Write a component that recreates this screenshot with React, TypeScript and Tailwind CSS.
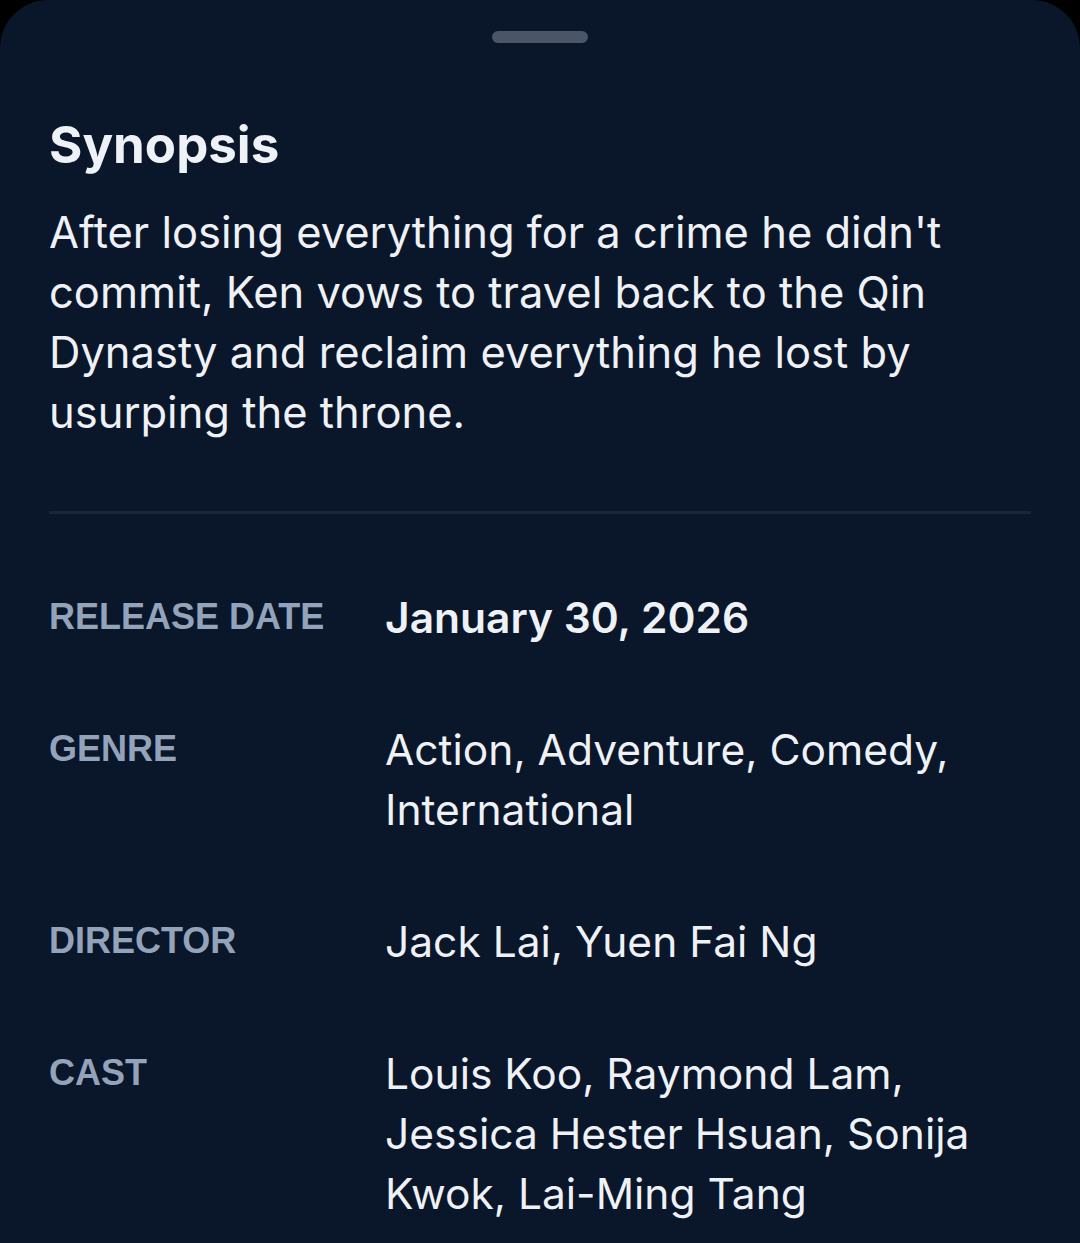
const details = [
  { label: "Release Date", value: "January 30, 2026", strong: true },
  { label: "Genre", value: "Action, Adventure, Comedy, International" },
  { label: "Director", value: "Jack Lai, Yuen Fai Ng" },
  { label: "Cast", value: "Louis Koo, Raymond Lam, Jessica Hester Hsuan, Sonija Kwok, Lai-Ming Tang" },
]

export default function App() {
  return (
    <div className="min-h-[1243px] bg-black">
      <div className="min-h-[1243px] rounded-t-[48px] bg-[#0a162a] px-[49px] pt-[31px] pb-10 font-['Inter',sans-serif] text-[#eef1f5]">
        {/* Drag handle */}
        <div className="mx-auto h-3 w-24 rounded-full bg-[#4a5568]" />

        {/* Synopsis */}
        <h2 className="mt-[72px] text-[51px] font-bold leading-[60px]">Synopsis</h2>
        <p className="mt-[27px] text-[43.5px] leading-[60px]">
          After losing everything for a crime he didn't commit, Ken vows to travel back to the Qin Dynasty and
          reclaim everything he lost by usurping the throne.
        </p>

        <div className="mt-[69px] h-[3px] bg-[#1a2537]" />

        {/* Details */}
        <dl className="mt-[74px] flex flex-col gap-[72px]">
          {details.map((item) => (
            <div key={item.label} className="grid grid-cols-[336px_1fr]">
              <dt className="font-['Liberation_Sans',sans-serif] text-[36px] font-bold uppercase leading-[58px] text-[#93a3ba]">
                {item.label}
              </dt>
              <dd className={item.strong ? "text-[42.5px] font-semibold leading-[60px]" : "text-[42.5px] leading-[60px]"}>
                {item.value}
              </dd>
            </div>
          ))}
        </dl>
      </div>
    </div>
  )
}
